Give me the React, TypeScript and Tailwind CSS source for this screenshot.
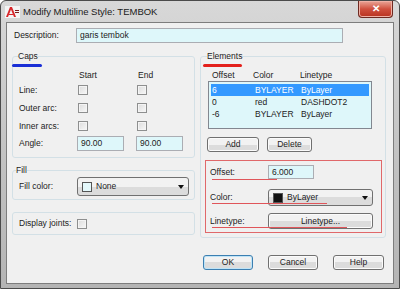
import React from 'react';

const font = { fontFamily: '"Liberation Sans", Arial, sans-serif' };

const CheckBox: React.FC = () => (
  <div className="w-[10px] h-[10px] border border-[#8e8f8f] bg-gradient-to-br from-[#dcdcdc] to-[#f8f8f8] shadow-[inset_0_0_0_1px_#f4f4f4]" />
);

const TextBox: React.FC<{ value: string; w: string; h?: string }> = ({ value, w, h = 'h-[15px]' }) => (
  <div className={`${w} ${h} border border-[#abadb3] bg-[#def7fa] flex items-center pl-[3px] text-[8.5px] text-[#222]`}>
    {value}
  </div>
);

const Button: React.FC<{ label: string; w: string; h?: string; def?: boolean }> = ({ label, w, h = 'h-[15px]', def }) => (
  <div
    className={`${w} ${h} rounded-[3px] border ${
      def ? 'border-[#3c7fb1] shadow-[inset_0_0_0_1px_#bfe4f7]' : 'border-[#707070] shadow-[inset_0_0_0_1px_#fbfbfb]'
    } bg-gradient-to-b from-[#f2f2f2] from-50% to-[#dcdcdc] to-50% flex items-center justify-center text-[8.5px] text-[#222]`}
  >
    {label}
  </div>
);

const Arrow: React.FC = () => (
  <svg width="6" height="4" viewBox="0 0 6 4" className="ml-auto mr-[4px]">
    <path d="M0 0h6L3 4z" fill="#111" />
  </svg>
);

const Dropdown: React.FC<{ label: string; swatch: string; w: string; h: string }> = ({ label, swatch, w, h }) => (
  <div className={`${w} ${h} rounded-[3px] border border-[#707070] bg-gradient-to-b from-[#f2f2f2] from-50% to-[#dcdcdc] to-50% flex items-center pl-[4px] text-[8.5px] text-[#222]`}>
    <div className={`w-[10px] h-[10px] border border-[#555] ${swatch}`} />
    <span className="ml-[4px]">{label}</span>
    <Arrow />
  </div>
);

const Logo: React.FC = () => (
  <svg width="15" height="12" viewBox="0 0 15 12">
    <rect x="0" y="0" width="15" height="12" fill="#f4f4f4" />
    <path d="M1 11 L5 1 L7 1 L11 11 L9 11 L6 3.5 L3 11 Z" fill="#d8262a" />
    <path d="M4 8 H8 V9 H4 Z" fill="#d8262a" />
    <path d="M10 4 h4 v1 h-4 z M10 6 h4 v1 h-4 z" fill="#7a1a1a" />
  </svg>
);

const rows = [
  { off: '6', color: 'BYLAYER', type: 'ByLayer', sel: true },
  { off: '0', color: 'red', type: 'DASHDOT2', sel: false },
  { off: '-6', color: 'BYLAYER', type: 'ByLayer', sel: false },
];

export default function App() {
  return (
    <div
      style={font}
      className="w-[400px] h-[289px] rounded-t-[6px] border border-[#4b4b4b] bg-gradient-to-b from-[#d8d8d8] via-[#c4c4c4] to-[#b4b4b4] flex flex-col overflow-hidden"
    >
      {/* title bar */}
      <div className="h-[21px] flex items-start shrink-0">
        <div className="mt-[5px] ml-[4px]">
          <Logo />
        </div>
        <span className="ml-[3px] mt-[5px] text-[9.5px] leading-[12px] text-[#1a1a1a]">Modify Multiline Style: TEMBOK</span>
        <div className="ml-auto mr-[6px] w-[35px] h-[17px] rounded-b-[4px] border border-t-0 border-[#6e2a22] bg-gradient-to-b from-[#e9a598] via-[#d0503e] to-[#b8321f] flex items-center justify-center text-white text-[10px] font-bold leading-none shadow-[inset_0_0_0_1px_#f0b0a4]">
          ✕
        </div>
      </div>

      {/* client area */}
      <div className="ml-[5px] w-[388px] h-[262px] border border-[#7d7d7d] bg-[#f0f0f0] text-[8.5px] text-[#222] flex flex-col">
        {/* description */}
        <div className="mt-[5px] pl-[7px] flex items-center">
          <span className="w-[62px]">Description:</span>
          <TextBox value="garis tembok" w="w-[267px]" />
        </div>

        {/* columns */}
        <div className="relative mt-[7px] pl-[5px] flex gap-[5px]">
          <div className="absolute left-[5px] top-[14px] w-[30px] h-[3px] rounded-full bg-[#1a2fd6]" />
          <div className="absolute left-[196px] top-[14px] w-[39px] h-[3px] rounded-full bg-[#e3211c]" />

          {/* left column */}
          <div className="w-[183px] flex flex-col">
            <fieldset className="h-[108px] border border-[#d3e0e6] rounded-[3px]">
              <legend className="ml-[5px] leading-[12px]">Caps</legend>
              <div className="mt-[7px] pl-[6px] grid grid-cols-[58px_59px_1fr]">
                <div className="h-[12px]" />
                <div className="h-[12px] pl-[2px] flex items-center">Start</div>
                <div className="h-[12px] pl-[2px] flex items-center">End</div>

                {['Line:', 'Outer arc:', 'Inner arcs:'].map((l) => (
                  <React.Fragment key={l}>
                    <div className="h-[18px] flex items-center">{l}</div>
                    <div className="h-[18px] pl-[1px] flex items-center">
                      <CheckBox />
                    </div>
                    <div className="h-[18px] pl-[1px] flex items-center">
                      <CheckBox />
                    </div>
                  </React.Fragment>
                ))}

                <div className="h-[16px] flex items-center">Angle:</div>
                <div className="h-[16px] flex items-center">
                  <TextBox value="90.00" w="w-[47px]" />
                </div>
                <div className="h-[16px] flex items-center">
                  <TextBox value="90.00" w="w-[47px]" />
                </div>
              </div>
            </fieldset>

            <fieldset className="mt-[6px] h-[36px] border border-[#d3e0e6] rounded-[3px]">
              <legend className="ml-[3px] leading-[12px]">Fill</legend>
              <div className="mt-[1px] pl-[6px] flex items-center">
                <span className="w-[58px]">Fill color:</span>
                <Dropdown label="None" swatch="bg-[#e4f8fb]" w="w-[112px]" h="h-[19px]" />
              </div>
            </fieldset>

            <div className="mt-[12px] h-[23px] border border-[#d3e0e6] rounded-[3px] pl-[6px] flex items-center">
              <span className="w-[58px]">Display joints:</span>
              <CheckBox />
            </div>
          </div>

          {/* right column */}
          <div className="w-[186px] flex flex-col">
            <fieldset className="h-[188px] border border-[#d3e0e6] rounded-[3px]">
              <legend className="ml-[6px] leading-[12px]">Elements</legend>
              <div className="mt-[7px] pl-[11px] h-[12px] flex items-center">
                <span className="w-[41px]">Offset</span>
                <span className="w-[47px]">Color</span>
                <span>Linetype</span>
              </div>

              <div className="ml-[7px] w-[164px] h-[48px] border border-[#828790] bg-[#def7fa] pt-[2px] px-[2px]">
                {rows.map((r) => (
                  <div
                    key={r.off}
                    className={`h-[12px] pl-[1px] flex items-center ${r.sel ? 'bg-[#3399ff] text-white' : ''}`}
                  >
                    <span className="w-[43px]">{r.off}</span>
                    <span className="w-[46px]">{r.color}</span>
                    <span>{r.type}</span>
                  </div>
                ))}
              </div>

              <div className="mt-[8px] ml-[6px] flex gap-[8px]">
                <Button label="Add" w="w-[52px]" />
                <Button label="Delete" w="w-[45px]" />
              </div>

              <div className="relative mt-[8px] ml-[4px] w-[177px] h-[73px] border border-[#e0686a] px-[4px] pt-[4px] flex flex-col">
                <div className="absolute left-[6px] top-[18px] w-[65px] h-px bg-[#e0555a]" />
                <div className="absolute left-[6px] top-[42px] w-[115px] h-px bg-[#e0555a]" />
                <div className="absolute left-[6px] top-[66px] w-[135px] h-px bg-[#e0555a]" />

                <div className="flex items-center">
                  <span className="w-[58px]">Offset:</span>
                  <TextBox value="6.000" w="w-[46px]" h="h-[14px]" />
                </div>
                <div className="mt-[10px] flex items-center">
                  <span className="w-[58px]">Color:</span>
                  <Dropdown label="ByLayer" swatch="bg-[#111]" w="w-[105px]" h="h-[17px]" />
                </div>
                <div className="mt-[7px] flex items-center">
                  <span className="w-[58px]">Linetype:</span>
                  <Button label="Linetype..." w="w-[105px]" h="h-[16px]" />
                </div>
              </div>
            </fieldset>
          </div>
        </div>

        {/* bottom buttons */}
        <div className="mt-[17px] pl-[196px] flex gap-[15px]">
          <Button label="OK" w="w-[50px]" def />
          <Button label="Cancel" w="w-[50px]" />
          <Button label="Help" w="w-[51px]" />
        </div>
      </div>
    </div>
  );
}
